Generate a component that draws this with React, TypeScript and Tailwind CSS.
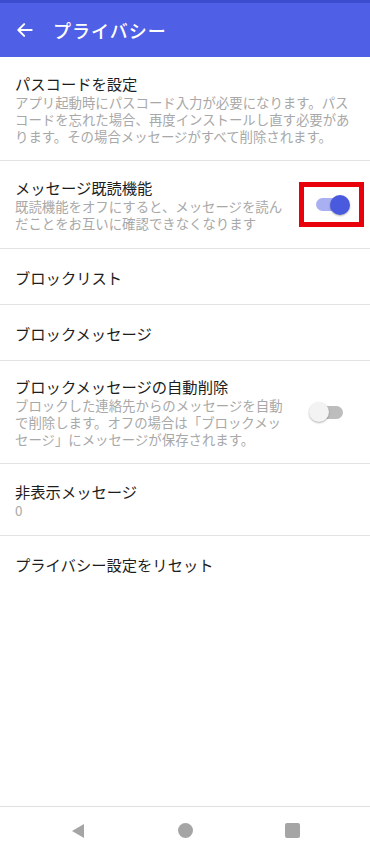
import React from "react";

const font = { fontFamily: '"Noto Sans CJK JP", "Noto Sans", sans-serif' };

function Toggle({ on }: { on: boolean }) {
  return (
    <div className="relative w-[36px] h-[20px] flex items-center">
      <div
        className={`w-[32px] h-[13px] rounded-full ml-[2px] ${on ? "bg-[#a9b0f2]" : "bg-[#bdbdbd]"}`}
      />
      <div
        className={`absolute top-0 w-[20px] h-[20px] rounded-full shadow-[0_1px_2px_rgba(0,0,0,0.3)] ${
          on ? "right-0 bg-[#4a5adf]" : "left-0 bg-[#f3f3f3]"
        }`}
      />
    </div>
  );
}

function Row({
  title,
  desc,
  right,
  className = "",
}: {
  title: string;
  desc?: string;
  right?: React.ReactNode;
  className?: string;
}) {
  return (
    <div className={`flex items-center border-b border-[#e3e3e3] pl-[15px] ${className}`}>
      <div className="flex-1">
        <div className="text-[15.3px] leading-[20px] text-[#1d1d1d]">{title}</div>
        {desc && (
          <div className="text-[13.4px] leading-[17px] text-[#a8a8a8] mt-[1px]">{desc}</div>
        )}
      </div>
      {right}
    </div>
  );
}

export default function App() {
  return (
    <div className="w-[370px] h-[852px] bg-white flex flex-col" style={font}>
      <div className="h-[3px] bg-[#3c4ccf]" />
      <div className="h-[54px] bg-[#4f60e6] flex items-center pl-[15px] text-white">
        <svg width="20" height="20" viewBox="0 0 24 24" fill="none" stroke="white" strokeWidth="2.4" strokeLinecap="round" strokeLinejoin="round">
          <path d="M20 12H5" />
          <path d="M11 5l-7 7 7 7" />
        </svg>
        <span className="ml-[18px] text-[18px] font-medium tracking-[1px]">プライバシー</span>
      </div>

      <div className="flex flex-col">
        <Row
          className="h-[104px] pr-[18px]"
          title="パスコードを設定"
          desc="アプリ起動時にパスコード入力が必要になります。パスコードを忘れた場合、再度インストールし直す必要があります。その場合メッセージがすべて削除されます。"
        />
        <Row
          className="h-[88px] pr-[6px]"
          title="メッセージ既読機能"
          desc="既読機能をオフにすると、メッセージを読んだことをお互いに確認できなくなります"
          right={
            <div className="ml-[12px] w-[65px] h-[45px] border-[5px] border-[#e8000b] flex items-center justify-center">
              <Toggle on />
            </div>
          }
        />
        <Row className="h-[56px] pr-[20px]" title="ブロックリスト" />
        <Row className="h-[56px] pr-[20px]" title="ブロックメッセージ" />
        <Row
          className="h-[103px] pr-[25px]"
          title="ブロックメッセージの自動削除"
          desc="ブロックした連絡先からのメッセージを自動で削除します。オフの場合は「ブロックメッセージ」にメッセージが保存されます。"
          right={
            <div className="ml-[24px]">
              <Toggle on={false} />
            </div>
          }
        />
        <Row className="h-[72px] pr-[20px]" title="非表示メッセージ" desc="0" />
        <Row className="h-[56px] pr-[20px] border-b-0" title="プライバシー設定をリセット" />
      </div>

      <div className="flex-1" />
      <div className="h-[46px] border-t border-[#e0e0e0] flex items-center justify-between px-[70px] pt-[2px]">
        <svg width="16" height="16" viewBox="0 0 16 16">
          <path d="M14 1L2 8l12 7z" fill="#a5a5a5" />
        </svg>
        <div className="w-[15px] h-[15px] rounded-full bg-[#a5a5a5]" />
        <div className="w-[15px] h-[15px] rounded-[2px] bg-[#a5a5a5]" />
      </div>
    </div>
  );
}
